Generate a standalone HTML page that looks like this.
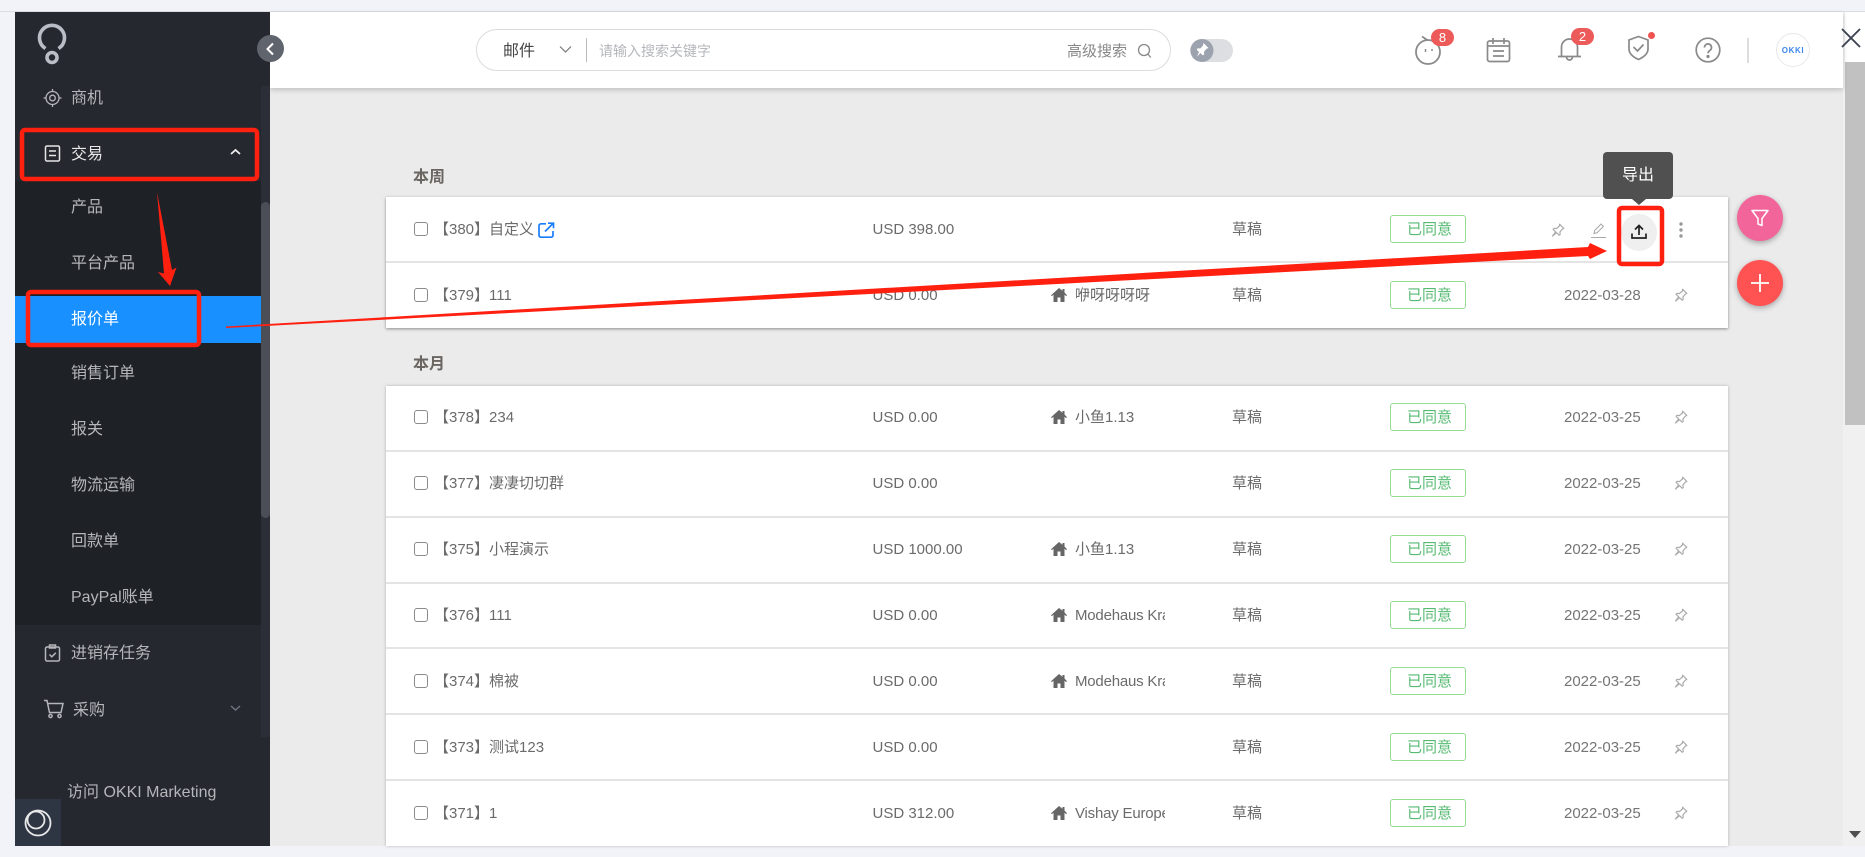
<!DOCTYPE html>
<html lang="zh"><head><meta charset="utf-8"><title>报价单</title>
<style>
*{box-sizing:border-box}
html,body{margin:0;padding:0;width:1865px;height:857px;overflow:hidden;background:#f1f3f8;font-family:"Liberation Sans","Noto Sans CJK SC",sans-serif}
.a{position:absolute}
#page{position:relative;width:1865px;height:857px;overflow:hidden;filter:blur(.3px)}
.m{position:absolute;white-space:nowrap;font-size:16px;line-height:24px;color:#b4b6ba;transform:translateY(1px)}
.r{position:absolute;left:386px;width:1342px;height:66px;font-size:15px;line-height:68px;color:#6b6b6b;white-space:nowrap}
.r>*{position:absolute}
.cb{left:27.5px;top:26px;width:14px;height:14px;border:1.4px solid #8a8a8a;border-radius:3px;background:#fff}
.t{left:48px}
.u{left:486.5px}
.c{left:689px;width:90px;height:68px;overflow:hidden}
.n{letter-spacing:-.2px}
.s{left:846px}
.g{left:1004px;top:19px;width:76px;height:28px;border:1.4px solid #93dd93;border-radius:3px;line-height:27px;color:#57ba72;padding-left:16px}
.d{left:1178px;color:#757575}
.h{left:665px;top:26px}
.p{left:1288px;top:26px}
.l{position:absolute;left:413px;font-size:16px;line-height:24px;font-weight:bold;color:#6a6560;transform:translateY(1px)}
.sep{position:absolute;left:386px;width:1342px;height:2px;background:#e4e4e4}
.b{position:absolute;height:17px;width:23px;border-radius:9px;background:#ec5a5a;color:#fff;font-size:13px;line-height:17px;text-align:center}
</style></head><body><div id="page">
<svg width="0" height="0" style="position:absolute">
<symbol id="pin" viewBox="0 0 14 14"><path d="M8.6 1.2l4.2 4.2-1.3.6-2.6 3 .3 2.4-1 .9-2.6-2.6L1.5 13l3.2-4.1-2.6-2.6.9-1 2.4.3 3-2.6z" fill="none" stroke="#ababab" stroke-width="1.2" stroke-linejoin="round"/></symbol>
<symbol id="home" viewBox="0 0 16 14"><path d="M8 0L0 7.2l.8.9L2.500 6.700V14h4V9.500h3V14h4V6.700l1.700 1.400.8-.9L13.500 4.500V1h-2v1.700z" fill="#666"/></symbol>
</svg>

<!-- main area -->
<div class="a" style="left:0;top:11px;width:1865px;height:1px;background:#dcdde1"></div>
<div class="a" style="left:270px;top:12px;width:1575px;height:834px;background:#ebebeb"></div>
<div class="a" style="left:1843px;top:12px;width:22px;height:834px;background:#f0f0f0"></div>
<div class="a" style="left:1845px;top:12px;width:20px;height:50px;background:#fff"></div>
<div class="a" style="left:1845px;top:62px;width:20px;height:363px;background:#c1c1c1"></div>
<svg class="a" style="left:1849px;top:831px" width="12" height="7"><path d="M0 0h12L6 7z" fill="#505050"/></svg>

<!-- header -->
<div class="a" style="left:270px;top:12px;width:1573px;height:76px;background:#fff;box-shadow:0 2px 5px rgba(0,0,0,.18)"></div>
<div class="a" style="left:476px;top:29px;width:695px;height:42px;border:1px solid #dcdcdc;border-radius:21px;background:#fff"></div>
<div class="a" style="left:503px;top:40px;font-size:16px;line-height:24px;color:#444">邮件</div>
<svg class="a" style="left:559px;top:45px" width="13" height="9"><path d="M1 1.500l5.500 5.500L12 1.500" fill="none" stroke="#777" stroke-width="1.200"/></svg>
<div class="a" style="left:586px;top:38px;width:1px;height:24px;background:#bbb"></div>
<div class="a" style="left:599px;top:41px;font-size:14px;line-height:20px;color:#b5b7bb">请输入搜索关键字</div>
<div class="a" style="left:1067px;top:41px;font-size:15px;line-height:22px;color:#888">高级搜索</div>
<svg class="a" style="left:1137px;top:43px" width="15" height="16"><circle cx="7" cy="7" r="5.500" fill="none" stroke="#888" stroke-width="1.300"/><path d="M10.800 11l3 3.500" stroke="#888" stroke-width="1.300"/></svg>
<div class="a" style="left:1190px;top:39px;width:43px;height:23px;border-radius:12px;background:#dcdee2"></div>
<svg class="a" style="left:1190px;top:39px" width="24" height="23"><circle cx="12" cy="11.500" r="11.500" fill="#9ca2ae"/><path d="M13.500 4l5 5-2 .8-2.500 3 .2 2.600-1.500 1-2.200-2.400L7 17.500l2-4.500-2.300-2.200 1-1.500 2.600.2 2.700-3z" fill="#fff"/></svg>

<!-- header right icons -->
<svg class="a" style="left:1412px;top:32px" width="34" height="34" fill="none" stroke="#8a8a8a" stroke-width="1.800"><circle cx="16" cy="20" r="12"/><path d="M10 4.500l6 4" /><path d="M13.500 17v3M20 17v2" stroke-width="1.500"/></svg>
<div class="b" style="left:1431px;top:29px">8</div>
<svg class="a" style="left:1486px;top:37px" width="25" height="26" fill="none" stroke="#8a8a8a" stroke-width="1.700"><rect x="1.500" y="4" width="22" height="20.500" rx="2"/><path d="M7 1v6M18 1v6M1.500 9h22M7 14h11M7 19h11"/></svg>
<svg class="a" style="left:1557px;top:35px" width="25" height="27" fill="none" stroke="#8a8a8a" stroke-width="1.700"><path d="M4.500 21V12a8 8 0 0 1 16 0v9M1 21.500h23M9.500 22a3 3 0 0 0 6 0"/></svg>
<div class="b" style="left:1571px;top:28px">2</div>
<svg class="a" style="left:1627px;top:35px" width="23" height="26" fill="none" stroke="#8a8a8a" stroke-width="1.700"><path d="M11.500 1.500l9.500 3.500v9c0 5-4 8-9.500 10.500C6 22 2 19 2 14V5z"/><path d="M6.500 12l4 4 6-6.500"/></svg>
<div class="a" style="left:1648px;top:32px;width:7px;height:7px;border-radius:50%;background:#ef5350"></div>
<svg class="a" style="left:1695px;top:37px" width="26" height="26" fill="none" stroke="#8a8a8a" stroke-width="1.700"><circle cx="13" cy="13" r="11.800"/><path d="M9.500 10.500a3.500 3.500 0 1 1 5.500 2.800c-1.300.9-2 1.500-2 3"/><circle cx="13" cy="19.500" r=".8" fill="#8a8a8a"/></svg>
<div class="a" style="left:1747px;top:38px;width:2px;height:25px;background:#ddd"></div>
<div class="a" style="left:1776px;top:33px;width:34px;height:34px;border:1px solid #e8e8e8;border-radius:50%;background:#fff;text-align:center;font-size:8px;font-weight:bold;line-height:34px;color:#3c86f0;letter-spacing:.6px">OKKI</div>
<svg class="a" style="left:1841px;top:28px" width="20" height="20"><path d="M1 1l18 18M19 1L1 19" stroke="#3c4250" stroke-width="1.900"/></svg>

<!-- sidebar -->
<div class="a" style="left:15px;top:12px;width:255px;height:834px;background:#25282f"></div>
<div class="a" style="left:15px;top:181px;width:246px;height:444px;background:#1e2126"></div>
<div class="a" style="left:15px;top:296px;width:246px;height:47px;background:#1890ff"></div>
<div class="a" style="left:261px;top:86px;width:9px;height:651px;background:#2b2e36"></div>
<div class="a" style="left:261px;top:202px;width:9px;height:316px;border-radius:5px;background:#4b4e57"></div>
<svg class="a" style="left:36px;top:22px" width="32" height="44" fill="none" stroke="#b9bdc5" stroke-width="3.600"><path d="M9.500 26.500a12.500 12.500 0 1 1 13 0"/><circle cx="16" cy="35.500" r="5"/></svg>
<div class="a" style="left:256.500px;top:35px;width:27px;height:27px;border-radius:50%;background:#60656d"></div>
<svg class="a" style="left:265px;top:42px" width="10" height="14"><path d="M8 1.500L2.500 7 8 12.500" fill="none" stroke="#fff" stroke-width="2"/></svg>

<svg class="a" style="left:43px;top:88px" width="19" height="20" fill="none" stroke="#b4b6ba" stroke-width="1.300"><circle cx="9.500" cy="10" r="6.500"/><circle cx="9.500" cy="10" r="2.800"/><path d="M9.500 1v3M9.500 16v3M.500 10h3M15.500 10h3"/></svg>
<div class="m" style="left:71px;top:86px">商机</div>
<svg class="a" style="left:44px;top:145px" width="17" height="17" fill="none" stroke="#e6e6e6" stroke-width="1.500"><rect x="1.500" y="1" width="14" height="15" rx="1.500"/><path d="M5 6h7M5 10.500h7"/></svg>
<div class="m" style="left:71px;top:142px;color:#e8e8e8">交易</div>
<svg class="a" style="left:230px;top:148px" width="11" height="8"><path d="M1 6l4.500-4L10 6" fill="none" stroke="#eee" stroke-width="1.800"/></svg>
<div class="m" style="left:71px;top:195px">产品</div>
<div class="m" style="left:71px;top:251px">平台产品</div>
<div class="m" style="left:71px;top:307px;color:#fff">报价单</div>
<div class="m" style="left:71px;top:361px">销售订单</div>
<div class="m" style="left:71px;top:417px">报关</div>
<div class="m" style="left:71px;top:473px">物流运输</div>
<div class="m" style="left:71px;top:529px">回款单</div>
<div class="m" style="left:71px;top:585px">PayPal账单</div>
<svg class="a" style="left:44px;top:644px" width="17" height="18" fill="none" stroke="#b4b6ba" stroke-width="1.500"><rect x="1.500" y="3" width="14" height="14" rx="1.500"/><path d="M5.500 1h6v3h-6zM5.500 10.500l2.300 2.300 4-4"/></svg>
<div class="m" style="left:71px;top:641px">进销存任务</div>
<svg class="a" style="left:43px;top:699px" width="21" height="20" fill="none" stroke="#b4b6ba" stroke-width="1.500"><path d="M1 1.500h3l2.500 12h11.500L20 4.500H5"/><circle cx="7.500" cy="17" r="1.600"/><circle cx="16.500" cy="17" r="1.600"/></svg>
<div class="m" style="left:73px;top:698px">采购</div>
<svg class="a" style="left:230px;top:704px" width="11" height="8"><path d="M1 2l4.500 4L10 2" fill="none" stroke="#70747c" stroke-width="1.500"/></svg>
<div class="m" style="left:67px;top:780px">访问 OKKI Marketing</div>
<div class="a" style="left:15px;top:799px;width:46px;height:47px;background:#2e3644"></div>
<svg class="a" style="left:24px;top:808px" width="29" height="30" fill="none" stroke="#e8e8e8" stroke-width="1.800"><circle cx="14" cy="15" r="12.500"/><circle cx="12" cy="12" r="8.500"/></svg>

<!-- content -->
<div class="l" style="top:165px">本周</div>
<div class="a" style="left:386px;top:197px;width:1342px;height:131px;background:#fff;box-shadow:0 1px 3px rgba(0,0,0,.4)"></div>
<div class="sep" style="top:261px"></div>

<div class="r" style="top:196px"><i class="cb"></i><span class="t">【380】自定义</span><span class="u">USD 398.00</span><span class="s">草稿</span><span class="g">已同意</span></div>
<svg class="a" style="left:538px;top:222px" width="17" height="16" fill="none" stroke="#1a7dfa" stroke-width="1.700"><path d="M8 1.800H3a2 2 0 0 0-2 2v9.400a2 2 0 0 0 2 2h10a2 2 0 0 0 2-2V9"/><path d="M7 9.500L14.500 2M10 1.200h5.500v5"/></svg>
<svg class="a" style="left:1551px;top:223px" width="14" height="14"><use href="#pin"/></svg>
<svg class="a" style="left:1591px;top:222px" width="15" height="17" fill="none" stroke="#aaa" stroke-width="1.100"><path d="M3 11.500l.7-3L10 2l2.400 2.400-6.300 6.400zM0 15.500h15"/></svg>
<div class="a" style="left:1621px;top:214px;width:36px;height:37px;border-radius:50%;background:#efefef"></div>
<svg class="a" style="left:1631px;top:224px" width="16" height="16" fill="none" stroke="#222" stroke-width="1.700"><path d="M8 11V2M4 5.500L8 1.500l4 4M1 9.500v4.500h14V9.500"/></svg>
<svg class="a" style="left:1679px;top:222px" width="4" height="16" fill="#999"><circle cx="2" cy="2" r="1.700"/><circle cx="2" cy="8" r="1.700"/><circle cx="2" cy="14" r="1.700"/></svg>

<div class="r" style="top:262px"><i class="cb"></i><span class="t">【379】111</span><span class="u">USD 0.00</span><svg class="h" width="16" height="14"><use href="#home"/></svg><span class="c">咿呀呀呀呀</span><span class="s">草稿</span><span class="g">已同意</span><span class="d">2022-03-28</span><svg class="p" width="14" height="14"><use href="#pin"/></svg></div>

<div class="l" style="top:352px">本月</div>
<div class="a" style="left:386px;top:386px;width:1342px;height:460px;background:#fff;box-shadow:0 0 3px rgba(0,0,0,.25)"></div>
<div class="sep" style="top:450px"></div><div class="sep" style="top:516px"></div><div class="sep" style="top:582px"></div><div class="sep" style="top:647px"></div><div class="sep" style="top:713px"></div><div class="sep" style="top:779px"></div>

<div class="r" style="top:384px"><i class="cb"></i><span class="t">【378】234</span><span class="u">USD 0.00</span><svg class="h" width="16" height="14"><use href="#home"/></svg><span class="c">小鱼1.13</span><span class="s">草稿</span><span class="g">已同意</span><span class="d">2022-03-25</span><svg class="p" width="14" height="14"><use href="#pin"/></svg></div>
<div class="r" style="top:450px"><i class="cb"></i><span class="t">【377】凄凄切切群</span><span class="u">USD 0.00</span><span class="s">草稿</span><span class="g">已同意</span><span class="d">2022-03-25</span><svg class="p" width="14" height="14"><use href="#pin"/></svg></div>
<div class="r" style="top:516px"><i class="cb"></i><span class="t">【375】小程演示</span><span class="u">USD 1000.00</span><svg class="h" width="16" height="14"><use href="#home"/></svg><span class="c">小鱼1.13</span><span class="s">草稿</span><span class="g">已同意</span><span class="d">2022-03-25</span><svg class="p" width="14" height="14"><use href="#pin"/></svg></div>
<div class="r" style="top:582px"><i class="cb"></i><span class="t">【376】111</span><span class="u">USD 0.00</span><svg class="h" width="16" height="14"><use href="#home"/></svg><span class="c n">Modehaus Kraft</span><span class="s">草稿</span><span class="g">已同意</span><span class="d">2022-03-25</span><svg class="p" width="14" height="14"><use href="#pin"/></svg></div>
<div class="r" style="top:648px"><i class="cb"></i><span class="t">【374】棉被</span><span class="u">USD 0.00</span><svg class="h" width="16" height="14"><use href="#home"/></svg><span class="c n">Modehaus Kraft</span><span class="s">草稿</span><span class="g">已同意</span><span class="d">2022-03-25</span><svg class="p" width="14" height="14"><use href="#pin"/></svg></div>
<div class="r" style="top:714px"><i class="cb"></i><span class="t">【373】测试123</span><span class="u">USD 0.00</span><span class="s">草稿</span><span class="g">已同意</span><span class="d">2022-03-25</span><svg class="p" width="14" height="14"><use href="#pin"/></svg></div>
<div class="r" style="top:780px"><i class="cb"></i><span class="t">【371】1</span><span class="u">USD 312.00</span><svg class="h" width="16" height="14"><use href="#home"/></svg><span class="c n">Vishay Europe</span><span class="s">草稿</span><span class="g">已同意</span><span class="d">2022-03-25</span><svg class="p" width="14" height="14"><use href="#pin"/></svg></div>

<!-- float buttons -->
<div class="a" style="left:1737px;top:195px;width:46px;height:46px;border-radius:50%;background:#f2659a;box-shadow:0 2px 6px rgba(0,0,0,.3)"></div>
<svg class="a" style="left:1751px;top:209px" width="18" height="18" fill="none" stroke="#fff" stroke-width="1.500"><path d="M1 1.500h16L11 9.500v7l-4-1.500V9.500z" stroke-linejoin="round"/></svg>
<div class="a" style="left:1737px;top:260px;width:46px;height:46px;border-radius:50%;background:#ff5252;box-shadow:0 2px 6px rgba(0,0,0,.3)"></div>
<svg class="a" style="left:1751px;top:274px" width="18" height="18"><path d="M9 0v18M0 9h18" stroke="#fff" stroke-width="1.800"/></svg>

<!-- tooltip -->
<div class="a" style="left:1603px;top:152px;width:70px;height:47px;border-radius:4px;background:#505050;color:#fff;font-size:16px;line-height:47px;text-align:center">导出</div>
<svg class="a" style="left:1632px;top:199px" width="14" height="6"><path d="M0 0h14L7 6z" fill="#505050"/></svg>

<!-- annotations -->
<svg class="a" style="left:0;top:0;pointer-events:none" width="1865" height="857">
<g fill="none" stroke="#ff2010" stroke-width="4.500">
<rect x="22" y="130" width="235" height="49" rx="3"/>
<rect x="28" y="292" width="171" height="53" rx="3"/>
<rect x="1619" y="208" width="43" height="56" rx="3"/>
</g>
<path d="M157 192L172 270l4.500-2.500L170 286 158 272l6 1.500z" fill="#ff2010"/>
<path d="M226 326.500L1588 247l2-4 17 8-17 8-2-3L226 328z" fill="#ff2010"/>
</svg>
</div></body></html>
